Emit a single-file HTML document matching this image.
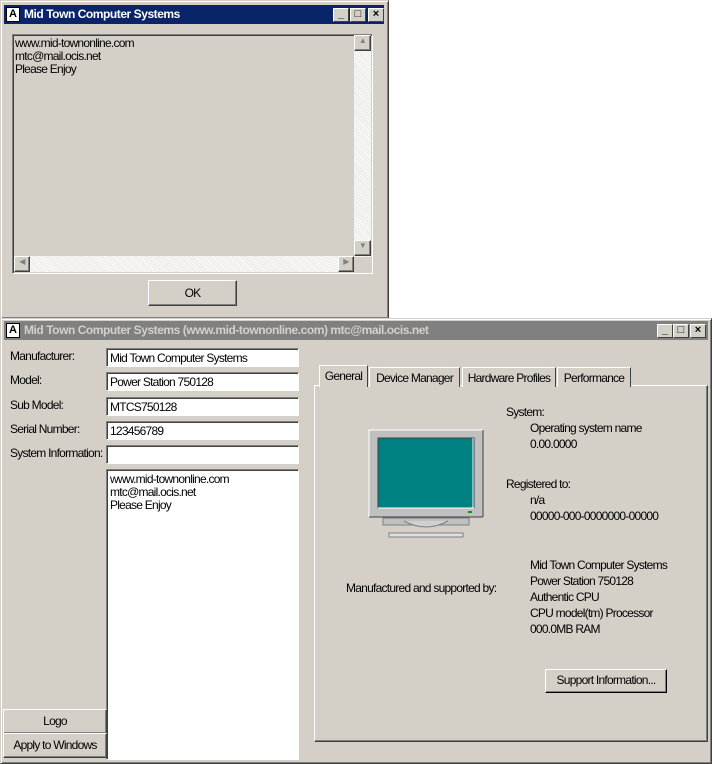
<!DOCTYPE html>
<html><head><style>
*{box-sizing:border-box;margin:0;padding:0}
body{width:713px;height:764px;background:#fff;position:relative;overflow:hidden;font-family:"Liberation Sans",sans-serif;font-size:12px;color:#000;letter-spacing:-0.75px}
.a{position:absolute}
.win{background:#d4d0c8;border:1px solid;border-color:#d4d0c8 #404040 #404040 #d4d0c8;box-shadow:inset 1px 1px #fff,inset -1px -1px #808080}
.tb{position:absolute;left:4px;right:4px;height:19px;font-weight:bold;font-size:12px;line-height:19px;padding-left:20px;letter-spacing:-0.45px}
.ic{position:absolute;left:2px;top:2px;width:14px;height:15px;background:#fff;border:1px solid #000;font-size:11px;line-height:13px;text-align:center;color:#000;font-weight:bold;letter-spacing:0}
.cb{position:absolute;top:3px;width:16px;height:14px;background:#d4d0c8;border:1px solid;border-color:#fff #404040 #404040 #fff;font-size:11px;line-height:11px;text-align:center;color:#000;font-weight:bold;letter-spacing:0}
.btn{position:absolute;background:#d4d0c8;border:1px solid;border-color:#fff #404040 #404040 #fff;box-shadow:inset -1px -1px #808080;text-align:center}
.inp{position:absolute;background:#fff;border:1px solid;border-color:#808080 #fff #fff #808080;box-shadow:inset 1px 1px #404040;padding:3px 3px;line-height:13px;height:19px}
.lbl{position:absolute;left:10px}
.sb{background-color:#e8e6e2;background-image:repeating-linear-gradient(45deg,#fff 0 1px,transparent 1px 2px)}
.tab{position:absolute;top:367px;height:20px;border:1px solid;border-color:#fff #404040 transparent #fff;border-bottom:none;padding:3px 0 0;text-align:center;background:#d4d0c8}
</style></head><body>
<div class="a win" style="left:0;top:0;width:389px;height:319px"></div>
<div class="tb" style="top:5px;left:4px;width:380px;background:#0a246a;color:#fff"><div class="ic">A</div>Mid Town Computer Systems
<div class="cb" style="left:329px">_</div><div class="cb" style="left:346px">□</div><div class="cb" style="left:364px">×</div></div>
<div class="a" style="left:12px;top:34px;width:361px;height:240px;border:1px solid;border-color:#808080 #fff #fff #808080;box-shadow:inset 1px 1px #404040"></div>
<div class="a" style="left:15px;top:37px;line-height:13px">www.mid-townonline.com<br>mtc@mail.ocis.net<br>Please Enjoy</div>
<div class="a sb" style="left:354px;top:35px;width:17px;height:222px"></div>
<div class="btn" style="left:354px;top:35px;width:17px;height:16px;font-size:8px;color:#808080">▲</div>
<div class="btn" style="left:354px;top:240px;width:17px;height:16px;font-size:8px;color:#808080">▼</div>
<div class="a sb" style="left:14px;top:256px;width:340px;height:16px"></div>
<div class="btn" style="left:14px;top:256px;width:16px;height:16px;font-size:8px;color:#808080">◀</div>
<div class="btn" style="left:338px;top:256px;width:16px;height:16px;font-size:8px;color:#808080">▶</div>
<div class="btn" style="left:148px;top:280px;width:89px;height:26px;line-height:24px">OK</div>

<div class="a win" style="left:0;top:318px;width:712px;height:446px"></div>
<div class="tb" style="top:321px;left:4px;width:704px;background:#808080;color:#d4d0c8"><div class="ic">A</div>Mid Town Computer Systems (www.mid-townonline.com) mtc@mail.ocis.net
<div class="cb" style="left:653px">_</div><div class="cb" style="left:669px">□</div><div class="cb" style="left:686px">×</div></div>
<div class="lbl" style="top:349px">Manufacturer:</div>
<div class="lbl" style="top:373px">Model:</div>
<div class="lbl" style="top:398px">Sub Model:</div>
<div class="lbl" style="top:422px">Serial Number:</div>
<div class="lbl" style="top:446px">System Information:</div>
<div class="inp" style="left:106px;top:348px;width:193px">Mid Town Computer Systems</div>
<div class="inp" style="left:106px;top:372px;width:193px">Power Station 750128</div>
<div class="inp" style="left:106px;top:397px;width:193px">MTCS750128</div>
<div class="inp" style="left:106px;top:421px;width:193px">123456789</div>
<div class="inp" style="left:106px;top:445px;width:193px"></div>
<div class="inp" style="left:106px;top:469px;width:193px;height:291px">www.mid-townonline.com<br>mtc@mail.ocis.net<br>Please Enjoy</div>
<div class="btn" style="left:3px;top:709px;width:104px;height:25px;line-height:22px">Logo</div>
<div class="btn" style="left:3px;top:733px;width:104px;height:25px;line-height:22px">Apply to Windows</div>

<div class="a" style="left:314px;top:385px;width:394px;height:357px;border:1px solid;border-color:#fff #404040 #404040 #fff;box-shadow:inset -1px -1px #808080"></div>
<div class="tab" style="left:319px;top:365px;height:22px;width:49px;z-index:2">General</div>
<div class="tab" style="left:369px;width:91px">Device Manager</div>
<div class="tab" style="left:462px;width:94px">Hardware Profiles</div>
<div class="tab" style="left:557px;width:74px">Performance</div>

<svg class="a" style="left:368px;top:429px" width="118" height="112">
<rect x="1" y="1" width="114" height="87" fill="#c0c0c0" stroke="#fff"/>
<line x1="115" y1="1" x2="115" y2="88" stroke="#404040"/>
<line x1="1" y1="88" x2="115" y2="88" stroke="#404040"/>
<rect x="10" y="9" width="96" height="70" fill="#008080" stroke="#404040"/>
<line x1="105" y1="9" x2="105" y2="79" stroke="#fff"/>
<line x1="10" y1="79" x2="106" y2="79" stroke="#fff"/>
<rect x="100" y="82" width="4" height="2" fill="#00a000"/>
<rect x="15" y="89" width="86" height="7" fill="#c0c0c0" stroke="#808080"/>
<path d="M36 92 Q58 104 80 92" fill="#d0d0d0" stroke="#808080"/>
<rect x="21" y="104" width="74" height="4" fill="#e0e0e0" stroke="#808080"/>
</svg>

<div class="a" style="left:506px;top:405px">System:</div>
<div class="a" style="left:530px;top:421px">Operating system name</div>
<div class="a" style="left:530px;top:437px">0.00.0000</div>
<div class="a" style="left:506px;top:477px">Registered to:</div>
<div class="a" style="left:530px;top:493px">n/a</div>
<div class="a" style="left:530px;top:509px">00000-000-0000000-00000</div>
<div class="a" style="left:346px;top:581px">Manufactured and supported by:</div>
<div class="a" style="left:530px;top:557px;line-height:16px">Mid Town Computer Systems<br>Power Station 750128<br>Authentic CPU<br>CPU model(tm) Processor<br>000.0MB RAM</div>
<div class="btn" style="left:545px;top:669px;width:122px;height:24px;line-height:21px;border-color:#fff #000 #000 #fff">Support Information...</div>
</body></html>
